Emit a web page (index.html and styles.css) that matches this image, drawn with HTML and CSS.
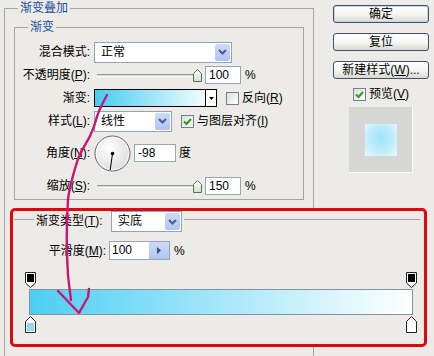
FILE: index.html
```html
<!DOCTYPE html>
<html lang="zh-CN">
<head>
    <meta charset="UTF-8">
    <title>渐变叠加</title>
    <link rel="stylesheet" href="styles.css">
</head>
<body>
<div class="dialog">
    <fieldset class="outer">
        <legend>渐变叠加</legend>
        <fieldset class="inner">
            <legend>渐变</legend>
            <div class="form">
                <span class="lbl">混合模式:</span>
                <div class="ctl">
                    <span class="select mode"><span class="val">正常</span><span class="drop"><svg width="9" height="6" viewBox="0 0 9 6"><path d="M1 1l3.5 3.5L8 1" fill="none" stroke="#4a5e86" stroke-width="2"/></svg></span></span>
                </div>

                <span class="lbl">不透明度(<u>P</u>):</span>
                <div class="ctl">
                    <span class="slider"><span class="track"></span><svg class="thumb" width="9" height="13" viewBox="0 0 9 13"><defs><linearGradient id="tg1" x1="0" y1="0" x2="0" y2="1"><stop offset="0" stop-color="#fff"/><stop offset="1" stop-color="#cde2c6"/></linearGradient></defs><path d="M4.5 .5L8.5 4.5V12.5H.5V4.5z" fill="url(#tg1)" stroke="#5f6f5f"/></svg></span>
                    <span class="num">100</span>
                    <span class="unit">%</span>
                </div>

                <span class="lbl">渐变:</span>
                <div class="ctl">
                    <span class="gpick"><span class="gfill"></span><span class="gdrop"><svg width="5" height="3" viewBox="0 0 5 3"><path d="M0 0h5L2.5 3z" fill="#000"/></svg></span></span>
                    <span class="chk"></span>
                    <span class="chk-lbl">反向(<u>R</u>)</span>
                </div>

                <span class="lbl">样式(<u>L</u>):</span>
                <div class="ctl">
                    <span class="select style"><span class="val">线性</span><span class="drop"><svg width="9" height="6" viewBox="0 0 9 6"><path d="M1 1l3.5 3.5L8 1" fill="none" stroke="#4a5e86" stroke-width="2"/></svg></span></span>
                    <span class="chk on"><svg width="11" height="11" viewBox="0 0 11 11"><path d="M2 5.5l2.5 2.5L9 3" fill="none" stroke="#21a121" stroke-width="2"/></svg></span>
                    <span class="chk-lbl">与图层对齐(<u>I</u>)</span>
                </div>

                <span class="lbl">角度(<u>N</u>):</span>
                <div class="ctl">
                    <svg class="dial" width="37" height="37" viewBox="0 0 37 37">
                        <defs><radialGradient id="dg" cx=".4" cy=".35" r=".75"><stop offset="0" stop-color="#fff"/><stop offset="1" stop-color="#d9d9d9"/></radialGradient></defs>
                        <circle cx="18.5" cy="18.5" r="17.5" fill="url(#dg)" stroke="#6c6c6c"/>
                        <circle cx="18.5" cy="18.5" r="16.2" fill="none" stroke="#fff" stroke-opacity=".8"/>
                        <line x1="18.5" y1="18.5" x2="16.2" y2="35" stroke="#000"/>
                        <circle cx="18.5" cy="18.5" r="1.8" fill="#000"/>
                    </svg>
                    <span class="num angle">-98</span>
                    <span class="unit deg">度</span>
                </div>

                <span class="lbl">缩放(<u>S</u>):</span>
                <div class="ctl">
                    <span class="slider"><span class="track"></span><svg class="thumb" width="9" height="13" viewBox="0 0 9 13"><defs><linearGradient id="tg2" x1="0" y1="0" x2="0" y2="1"><stop offset="0" stop-color="#fff"/><stop offset="1" stop-color="#cde2c6"/></linearGradient></defs><path d="M4.5 .5L8.5 4.5V12.5H.5V4.5z" fill="url(#tg2)" stroke="#5f6f5f"/></svg></span>
                    <span class="num">150</span>
                    <span class="unit">%</span>
                </div>
            </div>
        </fieldset>
    </fieldset>

    <div class="side">
        <div class="btn default">确定</div>
        <div class="btn">复位</div>
        <div class="btn last">新建样式(<u>W</u>)...</div>
        <div class="preview-check">
            <span class="chk on"><svg width="11" height="11" viewBox="0 0 11 11"><path d="M2 5.5l2.5 2.5L9 3" fill="none" stroke="#21a121" stroke-width="2"/></svg></span>
            <span>预览(<u>V</u>)</span>
        </div>
        <div class="preview"><div class="swatch"></div></div>
    </div>

    <div class="editor">
        <div class="type-row">
            <span class="type-lbl">渐变类型(<u>T</u>):</span>
            <span class="select type"><span class="val">实底</span><span class="drop"><svg width="9" height="6" viewBox="0 0 9 6"><path d="M1 1l3.5 3.5L8 1" fill="none" stroke="#4a5e86" stroke-width="2"/></svg></span></span>
        </div>
        <div class="smooth-row">
            <span class="smooth-lbl">平滑度(<u>M</u>):</span>
            <span class="spin"><span class="spin-val">100</span><span class="spin-btn"><svg width="4" height="7" viewBox="0 0 4 7"><path d="M0 0l4 3.5L0 7z" fill="#3b4f7a"/></svg></span></span>
            <span class="unit">%</span>
        </div>
        <div class="ramp">
            <div class="bar"></div>
            <svg class="stop top left" width="11" height="16" viewBox="0 0 11 16"><path d="M.5 .5H10.5V11L5.5 15.5L.5 11z" fill="#fff" stroke="#222"/><rect x="2" y="2" width="7" height="8" fill="#000"/></svg>
            <svg class="stop top right" width="11" height="16" viewBox="0 0 11 16"><path d="M.5 .5H10.5V11L5.5 15.5L.5 11z" fill="#fff" stroke="#222"/><rect x="2" y="2" width="7" height="8" fill="#000"/></svg>
            <svg class="stop bottom left" width="11" height="17" viewBox="0 0 11 17"><path d="M5.5 .5L10.5 5.5V16.5H.5V5.5z" fill="#fff" stroke="#222"/><rect x="2" y="7" width="7" height="8" fill="#8fd8f0"/></svg>
            <svg class="stop bottom right" width="11" height="17" viewBox="0 0 11 17"><path d="M5.5 .5L10.5 5.5V16.5H.5V5.5z" fill="#fff" stroke="#222"/></svg>
        </div>
    </div>

    <svg class="scribble" width="434" height="356" viewBox="0 0 434 356">
        <path d="M107 95C102 104 98 112 96 120C94 128 92 132 90 136C86 144 80 152 77 162C73 175 69 188 68 200C66 230 67 260 68 275C69 285 70 292 71 300M58 291L79 313L88 297L89 289" fill="none" stroke="#cc1573" stroke-width="2.4" stroke-linecap="round" stroke-linejoin="round"/>
    </svg>
</div>
</body>
</html>
```

FILE: styles.css
```css
html, body {
    margin: 0;
    padding: 0;
    overflow: hidden;
}
body {
    background-color: #ecebe7;
    color: #000;
    font-family: "Liberation Sans", "Noto Sans CJK SC", sans-serif;
    font-size: 12px;
}
u {
    text-decoration: underline;
}
.dialog {
    position: relative;
    width: 434px;
    height: 356px;
    overflow: hidden;
    box-sizing: border-box;
    padding: 1px 0 0 4px;
    display: grid;
    grid-template-columns: 310px 1fr;
    grid-template-rows: 207px 139px 60px;
}

/* group boxes */
.outer {
    grid-column: 1;
    grid-row: 1 / 4;
    margin: 0;
    padding: 5px 9px 0 9px;
    border: 1px solid #a4a4a4;
    min-width: 0;
}
.outer > legend {
    margin-left: 4px;
    padding: 0 2px;
    line-height: 14px;
    color: #1f4fa0;
}
.inner {
    margin: 0;
    padding: 7px 0 0 0;
    border: 1px solid #a4a4a4;
    min-width: 0;
}
.inner > legend {
    margin-left: 13px;
    padding: 0 2px;
    line-height: 14px;
    color: #1f4fa0;
}
.form {
    display: grid;
    grid-template-columns: 75px 1fr;
    grid-template-rows: 22px 24px 22px 24px 40px 26px;
    column-gap: 4px;
    align-items: center;
}
.lbl {
    text-align: right;
    line-height: 14px;
    white-space: nowrap;
}
.ctl {
    display: flex;
    align-items: center;
    line-height: 14px;
}

/* controls */
.select {
    display: flex;
    align-items: center;
    height: 21px;
    box-sizing: border-box;
    border: 1px solid #8ea3bf;
    background: #fff;
}
.select .val {
    flex: 1;
    padding-left: 6px;
}
.select .drop {
    width: 15px;
    height: 17px;
    margin-right: 1px;
    border-radius: 2px;
    background: linear-gradient(#cddbfb, #afc4f2);
    display: flex;
    align-items: center;
    justify-content: center;
}
.select.mode {
    width: 138px;
}
.select.style {
    width: 78px;
}
.select.type {
    width: 71px;
    margin-left: 5px;
}
.slider {
    display: flex;
    align-items: center;
    width: 108px;
}
.track {
    width: 100px;
    height: 3px;
    margin-left: 3px;
    box-sizing: border-box;
    border-top: 1px solid #9a9a9a;
    border-bottom: 1px solid #fff;
    background: #d6d6d6;
}
.thumb {
    margin-left: -4px;
}
.num {
    width: 36px;
    height: 18px;
    box-sizing: border-box;
    border: 1px solid #9aa5b3;
    background: #fff;
    padding-left: 3px;
    line-height: 16px;
    margin-left: 3px;
}
.num.angle {
    width: 42px;
}
.unit {
    margin-left: 4px;
}
.unit.deg {
    margin-left: 3px;
}
.gpick {
    display: flex;
    width: 123px;
    height: 18px;
    box-sizing: border-box;
    border: 1px solid #000;
}
.gfill {
    flex: 1;
    background: linear-gradient(to right, #45cdf3, #f2fcff);
}
.gdrop {
    width: 10px;
    border-left: 1px solid #000;
    background: #fff;
    display: flex;
    align-items: center;
    justify-content: center;
}
.chk {
    width: 13px;
    height: 13px;
    box-sizing: border-box;
    border: 1px solid #6f8098;
    background: linear-gradient(135deg, #dcdcd7, #fff);
    margin-left: 9px;
    display: flex;
    align-items: center;
    justify-content: center;
}
.chk-lbl {
    margin-left: 3px;
    white-space: nowrap;
}

/* right column */
.side {
    grid-column: 2;
    grid-row: 1;
    padding: 4px 0 0 19px;
    width: 96px;
    display: flex;
    flex-direction: column;
}
.btn {
    height: 18px;
    box-sizing: border-box;
    border: 1px solid #414f6c;
    border-radius: 3px;
    background: linear-gradient(#fff, #f4f4f1 55%, #d9d9d2);
    text-align: center;
    line-height: 16px;
    margin-bottom: 10px;
    white-space: nowrap;
}
.btn.default {
    box-shadow: inset 0 0 0 1px #c4d3ee;
}
.btn.last {
    margin-bottom: 8px;
}
.preview-check {
    display: flex;
    align-items: center;
    justify-content: center;
    height: 14px;
    line-height: 14px;
    gap: 3px;
}
.preview-check .chk {
    margin-left: 0;
}
.preview {
    width: 64px;
    height: 66px;
    margin: 6px auto 0;
    box-sizing: border-box;
    background: #d6d6d5;
    border-right: 1px solid #fafafa;
    border-bottom: 1px solid #fafafa;
    display: flex;
    align-items: center;
    justify-content: center;
}
.swatch {
    width: 32px;
    height: 32px;
    background: radial-gradient(ellipse at 50% 45%, #a2e2fa 0%, #b9eafb 45%, #eaf9fe 100%);
}

/* gradient editor, pasted over the dialog */
.editor {
    grid-column: 1 / 3;
    grid-row: 2;
    position: relative;
    z-index: 1;
    margin: 0 7px 0 6px;
    box-sizing: border-box;
    border: 3px solid #e1060e;
    border-radius: 5px;
    background: #ecebe7;
}
.type-row {
    display: flex;
    align-items: flex-start;
    height: 21px;
    margin: 0 4px 0 1px;
    line-height: 21px;
}
.type-row::before,
.type-row::after {
    content: "";
    margin-top: 8px;
    border-top: 1px solid #a4a4a4;
}
.type-row::before {
    width: 20px;
}
.type-row::after {
    flex: 1;
    margin-left: 2px;
}
.type-lbl {
    width: 70px;
    margin-left: 2px;
    white-space: nowrap;
}
.smooth-row {
    display: flex;
    align-items: center;
    height: 19px;
    margin-top: 9px;
    line-height: 14px;
}
.smooth-lbl {
    width: 93px;
    text-align: right;
    white-space: nowrap;
}
.spin {
    display: flex;
    height: 19px;
    box-sizing: border-box;
    margin-left: 3px;
    border: 1px solid #9aa5b3;
}
.spin-val {
    width: 39px;
    box-sizing: border-box;
    padding-left: 2px;
    background: #fff;
    line-height: 17px;
}
.spin-btn {
    width: 20px;
    background: linear-gradient(#cddbfb, #afc4f2);
    display: flex;
    align-items: center;
    justify-content: center;
}
.ramp {
    position: relative;
    width: 384px;
    margin: 12px 0 0 16px;
    padding: 17px 0 18px;
}
.bar {
    height: 26px;
    box-sizing: border-box;
    border: 1px solid #8794a0;
    background: linear-gradient(to right, #4ccff3, #ffffff);
}
.stop {
    position: absolute;
    display: block;
}
.stop.top {
    top: 0;
}
.stop.bottom {
    bottom: 0;
}
.stop.left {
    left: -4px;
}
.stop.right {
    right: -4px;
}

/* hand-drawn annotation arrow */
.scribble {
    position: absolute;
    left: 0;
    top: 0;
    z-index: 2;
    pointer-events: none;
}
```
